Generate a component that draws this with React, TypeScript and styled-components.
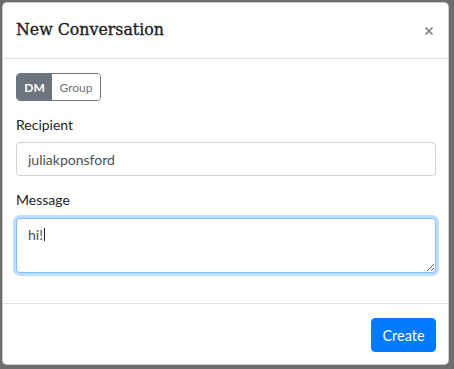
import { useState } from "react";
import styled, { createGlobalStyle } from "styled-components";

const GlobalStyle = createGlobalStyle`
  html, body {
    margin: 0;
    padding: 0;
    background: #6d6d6d;
  }
  * {
    box-sizing: border-box;
  }
`;

export default function App() {
  const [mode, setMode] = useState<"dm" | "group">("dm");
  const [recipient, setRecipient] = useState("juliakponsford");
  const [message, setMessage] = useState("hi!");

  return (
    <>
      <GlobalStyle />
      <Backdrop>
        <Modal>
          <Header>
            <Title>New Conversation</Title>
            <CloseButton aria-label="Close">
              <svg width="8" height="8" viewBox="0 0 8 8">
                <path d="M0.5 0.5 L7.5 7.5 M7.5 0.5 L0.5 7.5" stroke="#8a8a8a" strokeWidth="1.8" />
              </svg>
            </CloseButton>
          </Header>

          <Body>
            <ToggleGroup>
              <ToggleButton $active={mode === "dm"} $width={36} onClick={() => setMode("dm")}>
                DM
              </ToggleButton>
              <ToggleButton $active={mode === "group"} $width={49} onClick={() => setMode("group")}>
                Group
              </ToggleButton>
            </ToggleGroup>

            <FormGroup>
              <Label>Recipient</Label>
              <Input value={recipient} onChange={(e) => setRecipient(e.target.value)} />
            </FormGroup>

            <FormGroup>
              <Label>Message</Label>
              <TextAreaWrap>
                <TextArea value={message} onChange={(e) => setMessage(e.target.value)} />
                {/* focused caret, drawn since the screenshot can't show the blinking one */}
                <Caret />
              </TextAreaWrap>
            </FormGroup>
          </Body>

          <Footer>
            <PrimaryButton>Create</PrimaryButton>
          </Footer>
        </Modal>
      </Backdrop>
    </>
  );
}

const Backdrop = styled.div`
  width: 454px;
  height: 369px;
  padding: 2px 0 0 2px;
`;

const Modal = styled.div`
  width: 447px;
  background: #fff;
  border: 1px solid rgba(0, 0, 0, 0.2);
  border-radius: 5px;
  display: flex;
  flex-direction: column;
  font-family: Lato, "Open Sans", sans-serif;
  color: #212529;
`;

const Header = styled.div`
  height: 56px;
  display: flex;
  align-items: center;
  justify-content: space-between;
  padding: 0 14px 0 13px;
  border-bottom: 1px solid #dee2e6;
`;

const Title = styled.h5`
  margin: 0 0 2px;
  font-family: "DejaVu Serif", serif;
  font-size: 15.8px;
  font-weight: 400;
  line-height: 24px;
  color: #1d2124;
  -webkit-text-stroke: 0.35px #1d2124;
`;

const CloseButton = styled.button`
  background: transparent;
  border: none;
  padding: 0;
  width: 8px;
  height: 8px;
  display: flex;
  margin: 0 1px 0 0;
  cursor: pointer;
`;

const Body = styled.div`
  padding: 14px 12px 17px 13px;
  display: flex;
  flex-direction: column;
`;

const ToggleGroup = styled.div`
  display: flex;
  align-self: flex-start;
  height: 28px;
  border: 1px solid #6c757d;
  border-radius: 4px;
  overflow: hidden;
  margin-bottom: 13px;
`;

const ToggleButton = styled.button<{ $active: boolean; $width: number }>`
  width: ${(p) => p.$width - 1}px;
  border: none;
  padding: 0;
  font-family: Lato, sans-serif;
  font-size: 12px;
  font-weight: ${(p) => (p.$active ? 700 : 400)};
  background: ${(p) => (p.$active ? "#6c757d" : "#fff")};
  color: ${(p) => (p.$active ? "#fff" : "#6c757d")};
  cursor: pointer;
`;

const FormGroup = styled.div`
  display: flex;
  flex-direction: column;
  margin-bottom: 13px;
`;

const Label = styled.label`
  font-size: 14px;
  line-height: 21px;
  margin-bottom: 7px;
  color: #212529;
`;

const Input = styled.input`
  height: 34px;
  padding: 0 12px 0 11px;
  font-family: Lato, sans-serif;
  font-size: 14px;
  color: #495057;
  border: 1px solid #ced4da;
  border-radius: 4px;
  outline: none;
`;

const TextAreaWrap = styled.div`
  position: relative;
  display: flex;
  flex-direction: column;
  margin-top: 1px;
`;

const TextArea = styled.textarea`
  height: 55px;
  padding: 5px 12px 0 11px;
  font-family: Lato, sans-serif;
  font-size: 14px;
  line-height: 21px;
  color: #495057;
  border: 1px solid #80bdff;
  border-radius: 4px;
  outline: none;
  box-shadow: 0 0 0 3px rgba(0, 123, 255, 0.25);
  caret-color: transparent;
`;

const Caret = styled.span`
  position: absolute;
  left: 28px;
  top: 10px;
  width: 1px;
  height: 13px;
  background: #222;
  pointer-events: none;
`;

const Footer = styled.div`
  border-top: 1px solid #dee2e6;
  display: flex;
  justify-content: flex-end;
  padding: 14px 12px 12px;
`;

const PrimaryButton = styled.button`
  height: 34px;
  width: 65px;
  padding: 0;
  font-family: Lato, sans-serif;
  font-size: 14.5px;
  color: #fff;
  background: #007bff;
  border: 1px solid #007bff;
  border-radius: 4px;
  cursor: pointer;
`;
